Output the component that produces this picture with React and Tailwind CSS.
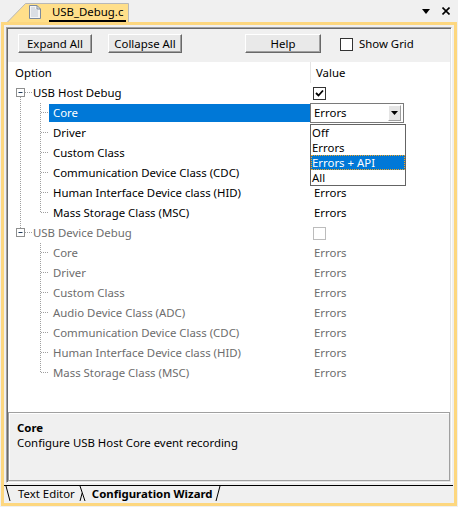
import React from 'react'

const hostItems = ['Core', 'Driver', 'Custom Class', 'Communication Device Class (CDC)', 'Human Interface Device class (HID)', 'Mass Storage Class (MSC)']
const deviceItems = ['Core', 'Driver', 'Custom Class', 'Audio Device Class (ADC)', 'Communication Device Class (CDC)', 'Human Interface Device class (HID)', 'Mass Storage Class (MSC)']

function Dots({ x1, y1, x2, y2 }) {
  return <line x1={x1} y1={y1} x2={x2} y2={y2} stroke="#a0a0a0" strokeDasharray="1 1" />
}

function ParentGutter({ up, down }) {
  return (
    <svg width="24" height="20" className="shrink-0">
      {up && <Dots x1={12.5} y1={0} x2={12.5} y2={5} />}
      {down && <Dots x1={12.5} y1={14} x2={12.5} y2={20} />}
      <rect x="8.5" y="5.5" width="8" height="8" fill="white" stroke="#8e8f8f" />
      <line x1="10.5" y1="9.5" x2="14.5" y2="9.5" stroke="#1e395b" />
      <Dots x1={17} y1={9.5} x2={24} y2={9.5} />
    </svg>
  )
}

function ChildGutter({ outer, last }) {
  return (
    <svg width="41" height="20" className="shrink-0">
      {outer && <Dots x1={12.5} y1={0} x2={12.5} y2={20} />}
      <Dots x1={32.5} y1={0} x2={32.5} y2={last ? 10 : 20} />
      <Dots x1={33} y1={9.5} x2={41} y2={9.5} />
    </svg>
  )
}

function Check({ checked, disabled }) {
  return (
    <span className={disabled ? 'ml-[3px] w-[13px] h-[13px] border border-[#bcbcbc] bg-white' : 'ml-[3px] w-[13px] h-[13px] border border-[#333333] bg-white flex items-center justify-center'}>
      {checked && (
        <svg width="9" height="9" viewBox="0 0 9 9">
          <path d="M1 4 L3.5 6.5 L8 1.5" fill="none" stroke="#000" strokeWidth="1.8" />
        </svg>
      )}
    </span>
  )
}

function ComboBox() {
  return (
    <div className="relative">
      <div className="w-[94px] h-[20px] border border-[#7a7a7a] bg-white flex items-center">
        <span className="pl-[3px]">Errors</span>
        <span className="ml-auto mr-[2px] w-[13px] h-[16px] bg-[#e5e5e5] border border-white border-r-[#a0a0a0] border-b-[#a0a0a0] flex items-center justify-center">
          <svg width="7" height="4" viewBox="0 0 7 4"><path d="M0 0 H7 L3.5 4 Z" fill="#000" /></svg>
        </span>
      </div>
      <div className="absolute left-0 top-[21px] z-10 w-[96px] border border-[#646464] bg-white leading-[15px]">
        <div className="h-[15px] pl-[1px]">Off</div>
        <div className="h-[15px] pl-[1px]">Errors</div>
        <div className="h-[15px] bg-[#0078d7] text-white border border-dotted border-[#f5a623] leading-[13px]">Errors + API</div>
        <div className="h-[15px] pl-[1px]">All</div>
      </div>
    </div>
  )
}

function Btn({ label, className }) {
  return (
    <button className={'h-[19px] bg-[#e9e9e9] border border-white border-r-[#696969] border-b-[#696969] shadow-[inset_-1px_-1px_0_#a0a0a0] leading-[17px] ' + className}>
      {label}
    </button>
  )
}

export default function App() {
  return (
    <div className="w-[458px] h-[507px] bg-[#f0f0f0] overflow-hidden text-[11.4px] text-black font-['Noto_Sans',sans-serif]">
      {/* document tab bar */}
      <div className="h-[22px] flex">
        <div className="relative ml-[7px] mt-[2px] w-[122px] h-[20px] flex items-center">
          <svg width="122" height="20" className="absolute inset-0">
            <path d="M0.5 20 L18.5 1.5 H121.5 V20" fill="#ffdf8a" stroke="#b8b8b8" />
          </svg>
          <svg width="12" height="14" viewBox="0 0 12 14" className="relative ml-[22px]">
            <path d="M0.5 0.5 H8 L11.5 4 V13.5 H0.5 Z" fill="#f4f4f4" stroke="#7c8a9c" />
            <path d="M8 0.5 V4 H11.5" fill="none" stroke="#7c8a9c" />
            <path d="M2 3 H6 M2 5 H9 M2 7 H9 M2 9 H9 M2 11 H9" stroke="#c0c8d4" />
          </svg>
          <span className="relative ml-[8px] mt-[2px] border-b-2 border-black px-[3px] leading-[16px]">USB_Debug.c</span>
        </div>
        <div className="ml-auto mr-[8px] flex items-center gap-[12px]">
          <svg width="8" height="5" viewBox="0 0 8 5"><path d="M0 0 H8 L4 5 Z" fill="#000" /></svg>
          <svg width="8" height="8" viewBox="0 0 8 8"><path d="M0.5 0.5 L7.5 7.5 M7.5 0.5 L0.5 7.5" stroke="#000" strokeWidth="1.6" /></svg>
        </div>
      </div>

      {/* yellow frame */}
      <div className="ml-[1px] w-[456px] h-[484px] border-[3px] border-[#fdd77f] bg-[#f0f0f0] flex flex-col">
        <div className="mt-[2px] mx-[2px] h-[456px] border border-[#a0a0a0] border-r-white border-b-white shadow-[inset_1px_1px_0_#696969,inset_-1px_-1px_0_#e3e3e3] p-[1px] flex flex-col">
          {/* toolbar */}
          <div className="h-[33px] flex items-start pt-[5px]">
            <Btn label="Expand All" className="ml-[10px] w-[74px]" />
            <Btn label="Collapse All" className="ml-[16px] w-[74px]" />
            <Btn label="Help" className="ml-[63px] w-[76px]" />
            <span className="ml-[19px] mt-[4px] w-[13px] h-[13px] border border-[#333333] bg-white" />
            <span className="ml-[6px] leading-[19px]">Show Grid</span>
          </div>

          {/* tree */}
          <div className="h-[350px] bg-white flex flex-col">
            <div className="h-[21px] flex">
              <div className="w-[302px] pl-[7px] leading-[21px]">Option</div>
              <div className="flex-1 border-l border-[#e5e5e5] pl-[5px] leading-[21px]">Value</div>
            </div>

            <div className="h-[20px] flex items-center">
              <div className="w-[302px] flex items-center">
                <ParentGutter down />
                <span className="pl-[1px]">USB Host Debug</span>
              </div>
              <Check checked />
            </div>
            {hostItems.map((name, i) => (
              <div key={'h' + i} className="h-[20px] flex items-center">
                <div className="w-[302px] h-[20px] flex items-center">
                  <ChildGutter outer last={i === hostItems.length - 1} />
                  {i === 0 ? (
                    <span className="flex-1 h-[18px] bg-[#0078d7] text-white pl-[4px] leading-[18px]">{name}</span>
                  ) : (
                    <span className="pl-[4px]">{name}</span>
                  )}
                </div>
                {i === 0 && <ComboBox />}
                {i > 3 && <span className="pl-[4px]">Errors</span>}
              </div>
            ))}

            <div className="h-[20px] flex items-center text-[#6d6d6d]">
              <div className="w-[302px] flex items-center">
                <ParentGutter up />
                <span className="pl-[1px]">USB Device Debug</span>
              </div>
              <Check disabled />
            </div>
            {deviceItems.map((name, i) => (
              <div key={'d' + i} className="h-[20px] flex items-center text-[#6d6d6d]">
                <div className="w-[302px] h-[20px] flex items-center">
                  <ChildGutter last={i === deviceItems.length - 1} />
                  <span className="pl-[4px]">{name}</span>
                </div>
                <span className="pl-[4px]">Errors</span>
              </div>
            ))}
          </div>

          {/* description */}
          <div className="flex-1 border border-[#a0a0a0] shadow-[inset_1px_1px_0_#ffffff] px-[8px] pt-[7px] leading-[15px]">
            <div className="font-bold">Core</div>
            <div>Configure USB Host Core event recording</div>
          </div>
        </div>

        {/* bottom tabs */}
        <div className="relative h-[20px] flex items-start">
          <svg width="450" height="20" className="absolute inset-0">
            <line x1="0" y1="2.5" x2="449" y2="2.5" stroke="#000" />
            <line x1="2" y1="3" x2="6" y2="18" stroke="#000" />
            <line x1="78.2" y1="10" x2="76" y2="18" stroke="#000" />
            <line x1="76" y1="3" x2="81" y2="18" stroke="#000" />
            <line x1="216" y1="3" x2="212" y2="18" stroke="#000" />
          </svg>
          <span className="relative ml-[14px] mt-[3px] leading-[15px]">Text Editor</span>
          <span className="relative ml-[17px] mt-[3px] leading-[15px] font-bold">Configuration Wizard</span>
        </div>
      </div>
    </div>
  )
}
